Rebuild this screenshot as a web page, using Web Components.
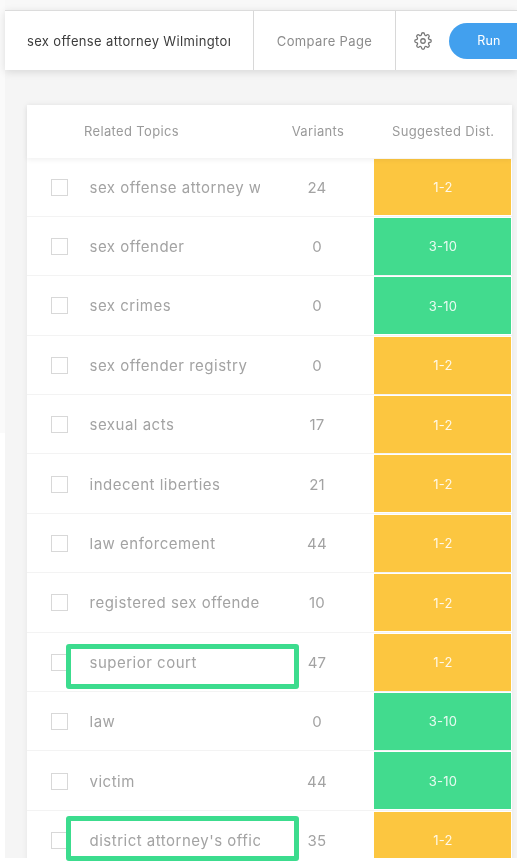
<!DOCTYPE html>
<html><head><meta charset="utf-8"><style>
html,body{margin:0;padding:0;width:517px;height:861px;overflow:hidden;background:#fff}
body{font-family:Inter,"Liberation Sans",sans-serif}
</style></head><body>
<app-page></app-page>
<script>
class TopBar extends HTMLElement{constructor(){super();this.attachShadow({mode:'open'}).innerHTML=`<style>
:host{display:flex;height:60px;box-sizing:border-box;background:#fff;border-top:1px solid #dcdcdc;box-shadow:0 2px 8px rgba(0,0,0,.12);position:relative;font-size:13px;color:#8c8c8c;letter-spacing:.35px}
.q{width:249px;flex:none;padding-left:22px;box-sizing:border-box;display:flex;align-items:center;color:#3c3c3c;border-right:1px solid #d8d8d8}
.q span{display:block;width:203px;overflow:hidden;white-space:nowrap}
.c{width:142px;flex:none;box-sizing:border-box;display:flex;align-items:center;justify-content:center;border-right:1px solid #d8d8d8}
.g{width:53px;flex:none;display:flex;align-items:center;justify-content:center;box-sizing:border-box}
.g svg{width:18px;height:18px;display:block}
.r{flex:1;display:flex;align-items:center}
.b{flex:1;height:36px;background:#42a0ee;color:#fff;border-radius:18px 0 0 18px;display:flex;align-items:center;justify-content:center;font-size:12.5px;letter-spacing:.2px;padding-left:12px;box-sizing:border-box}
</style><div class="q"><span>sex offense attorney Wilmington</span></div><div class="c">Compare Page</div>
<div class="g"><svg viewBox="0 0 24 24" fill="none" stroke="#777" stroke-width="1.7" stroke-linejoin="round" stroke-linecap="round"><circle cx="12" cy="12" r="3"/><path d="M19.4 15a1.65 1.65 0 0 0 .33 1.82l.06.06a2 2 0 0 1-2.83 2.83l-.06-.06a1.65 1.65 0 0 0-1.82-.33 1.65 1.65 0 0 0-1 1.51V21a2 2 0 0 1-4 0v-.09A1.65 1.65 0 0 0 9 19.4a1.65 1.65 0 0 0-1.82.33l-.06.06a2 2 0 0 1-2.83-2.83l.06-.06a1.65 1.65 0 0 0 .33-1.82 1.65 1.65 0 0 0-1.51-1H3a2 2 0 0 1 0-4h.09A1.65 1.65 0 0 0 4.6 9a1.65 1.65 0 0 0-.33-1.82l-.06-.06a2 2 0 0 1 2.83-2.83l.06.06a1.65 1.65 0 0 0 1.82.33H9a1.65 1.65 0 0 0 1-1.51V3a2 2 0 0 1 4 0v.09a1.65 1.65 0 0 0 1 1.51 1.65 1.65 0 0 0 1.82-.33l.06-.06a2 2 0 0 1 2.83 2.83l-.06.06a1.65 1.65 0 0 0-.33 1.82V9a1.65 1.65 0 0 0 1.51 1H21a2 2 0 0 1 0 4h-.09a1.65 1.65 0 0 0-1.51 1z"/></svg></div>
<div class="r"><div class="b">Run</div></div>`}}
customElements.define('top-bar',TopBar);

class TopicRow extends HTMLElement{constructor(){super();this.attachShadow({mode:'open'})}
connectedCallback(){const a=k=>this.getAttribute(k)||'';const y=a('dist')==='1-2';
this.shadowRoot.innerHTML=`<style>
:host{display:grid;grid-template-columns:62.5px 170.5px 114px 137px 1px;height:59.4px;box-sizing:border-box;border-bottom:1px solid #f3f3f3;align-items:center;font-size:15px;color:#a3a3a3;letter-spacing:.5px}
.cb{width:17px;height:17px;box-sizing:border-box;border:1px solid #d8d8d8;margin:1px 0 0 24px}
.t{overflow:hidden;white-space:nowrap;padding-top:1px}
.n{text-align:center;padding-top:1px;letter-spacing:.2px}
.d{align-self:stretch;margin:1px 0 .5px;background:${y?'#fcc640':'#42db8e'};color:rgba(255,255,255,.88);display:flex;align-items:center;justify-content:center;font-size:13px;letter-spacing:.2px;padding-left:1px}
</style><div class="cb"></div><div class="t">${a('name')}</div><div class="n">${a('n')}</div><div class="d">${a('dist')}</div>`}}
customElements.define('topic-row',TopicRow);

class TopicTable extends HTMLElement{constructor(){super();this.attachShadow({mode:'open'}).innerHTML=`<style>
:host{display:block;background:#fff;width:485px;box-shadow:0 0 6px rgba(0,0,0,.07)}
.h{display:grid;grid-template-columns:57px 191px 86px 1fr;height:52.5px;align-items:center;font-size:13px;color:#9a9a9a;letter-spacing:.35px;box-shadow:0 2px 5px rgba(0,0,0,.06);position:relative}
.v{text-align:center}.s{padding-left:31px;white-space:nowrap}
</style><div class="h"><div></div><div>Related Topics</div><div class="v">Variants</div><div class="s">Suggested Dist.</div></div><slot></slot>`}}
customElements.define('topic-table',TopicTable);

class AppPage extends HTMLElement{constructor(){super();
const rows=[['sex offense attorney w','24','1-2'],['sex offender','0','3-10'],['sex crimes','0','3-10'],['sex offender registry','0','1-2'],['sexual acts','17','1-2'],['indecent liberties','21','1-2'],['law enforcement','44','1-2'],['registered sex offende','10','1-2'],['superior court','47','1-2'],['law','0','3-10'],['victim','44','3-10'],["district attorney's offic",'35','1-2']];
this.attachShadow({mode:'open'}).innerHTML=`<style>
:host{display:block;width:517px;height:861px;position:relative;overflow:hidden;filter:blur(.35px)}
.stage{height:858px;overflow:hidden;display:flex;background:#f8f8f8;padding-top:10px;box-sizing:border-box;position:relative}
.edge{width:5px;flex:none;margin-top:-10px;background:linear-gradient(#fafafa 0 433px,#fff 433px)}
.main{flex:1;min-width:0;background:#f5f5f5}
.c{margin:35px 0 0 22px;width:485px}
.m{position:absolute;left:66px;width:233px;height:45px;box-sizing:border-box;border:5.5px solid #3cdc8e;border-radius:3px}
</style><div class="stage"><div class="edge"></div><div class="main"><top-bar></top-bar><div class="c"><topic-table>${rows.map(r=>`<topic-row name="${r[0]}" n="${r[1]}" dist="${r[2]}"></topic-row>`).join('')}</topic-table></div></div></div>
<div class="m" style="top:644px"></div><div class="m" style="top:816px"></div>`}}
customElements.define('app-page',AppPage);
</script></body></html>
